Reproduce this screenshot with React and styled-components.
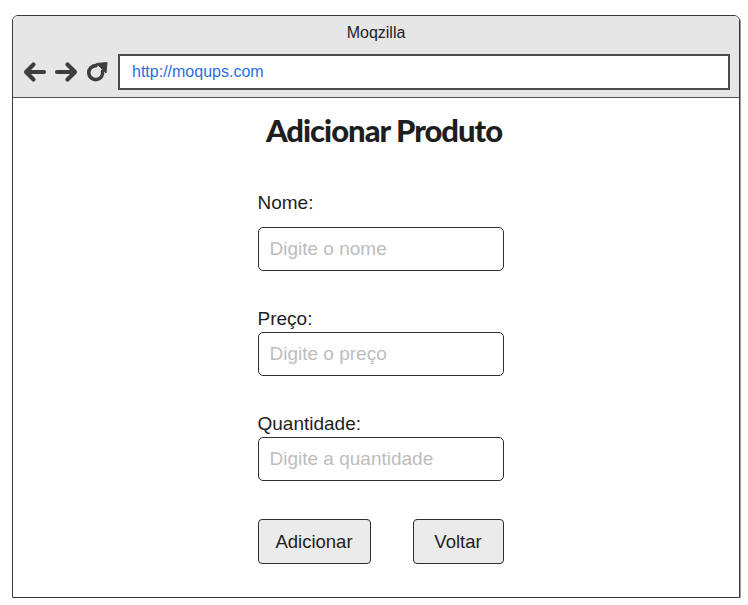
import React from 'react';
import styled, { createGlobalStyle } from 'styled-components';

const GlobalStyle = createGlobalStyle`
  body {
    margin: 0;
    background: #fff;
    font-family: 'Liberation Sans', Arial, sans-serif;
  }
`;

const Window = styled.div`
  box-sizing: border-box;
  width: 728px;
  height: 583px;
  margin: 15px 0 0 12px;
  border: 1px solid #3a3a3a;
  border-radius: 6px 6px 0 0;
  box-shadow: 1px 1px 0 #999;
  display: flex;
  flex-direction: column;
  overflow: hidden;
`;

const Toolbar = styled.div`
  background: #e6e6e6;
  border-bottom: 1px solid #555;
  padding: 7px 9px 8px 9px;
  display: flex;
  flex-direction: column;
  gap: 11px;
`;

const WindowTitle = styled.div`
  text-align: center;
  font-size: 16px;
  line-height: 20px;
  color: #222;
`;

const NavRow = styled.div`
  display: flex;
  align-items: center;
  height: 35px;
`;

const NavIcons = styled.div`
  display: flex;
  align-items: center;
  gap: 5px;
  width: 96px;
`;

const UrlBox = styled.div`
  flex: 1;
  box-sizing: border-box;
  height: 36px;
  border: 2px solid #4a4a4a;
  background: #fff;
  display: flex;
  align-items: center;
  padding-left: 12px;
  color: #2a6ee0;
  font-size: 16px;
`;

const Content = styled.div`
  flex: 1;
  display: flex;
  flex-direction: column;
  align-items: center;
  padding: 12px 0 0 16px;
`;

const Heading = styled.h1`
  margin: 0 0 42px 0;
  font-family: Lato, sans-serif;
  font-weight: 900;
  font-size: 31px;
  letter-spacing: -1px;
  line-height: 40px;
  color: #1e1e1e;
`;

const Form = styled.div`
  width: 246px;
  margin-right: 7px;
  display: flex;
  flex-direction: column;
`;

const Field = styled.div`
  display: flex;
  flex-direction: column;
  gap: ${(p) => p.gap}px;
  margin-bottom: ${(p) => p.after}px;
`;

const Label = styled.label`
  font-size: 19px;
  line-height: 21px;
  color: #1e1e1e;
`;

const Input = styled.input`
  box-sizing: border-box;
  width: 246px;
  height: 44px;
  border: 1px solid #2e2e2e;
  border-radius: 5px;
  padding: 0 11px;
  font-family: 'Liberation Sans', Arial, sans-serif;
  font-size: 19px;
  color: #222;
  outline: none;
  &::placeholder {
    color: #bdbdbd;
  }
`;

const ButtonRow = styled.div`
  display: flex;
  justify-content: space-between;
  margin-top: 1px;
`;

const Button = styled.button`
  box-sizing: border-box;
  width: ${(p) => p.w}px;
  height: 45px;
  background: #ebebeb;
  border: 1px solid #2e2e2e;
  border-radius: 4px;
  font-family: 'Liberation Sans', Arial, sans-serif;
  font-size: 18.5px;
  color: #1e1e1e;
  padding: 0;
`;

const ArrowIcon = ({ flip }) => (
  <svg width="26" height="22" viewBox="0 0 26 22" style={flip ? { transform: 'scaleX(-1)' } : undefined}>
    <path d="M22 11H5M11.5 3.5L4 11l7.5 7.5" fill="none" stroke="#3d3d3d" strokeWidth="4.2" strokeLinecap="round" strokeLinejoin="round" />
  </svg>
);

const ReloadIcon = () => (
  <svg width="24" height="22" viewBox="0 0 24 22">
    <path d="M12 4.6A7 7 0 1 0 18.6 10.2" fill="none" stroke="#3d3d3d" strokeWidth="3.6" strokeLinecap="round" />
    <path d="M12.5 2.5L23 1.5 22 12z" fill="#3d3d3d" stroke="#3d3d3d" strokeWidth="1" strokeLinejoin="round" />
  </svg>
);

const App = () => {
  return (
    <>
      <GlobalStyle />
      <Window>
        <Toolbar>
          <WindowTitle>Moqzilla</WindowTitle>
          <NavRow>
            <NavIcons>
              <ArrowIcon />
              <ArrowIcon flip />
              <ReloadIcon />
            </NavIcons>
            <UrlBox>http://moqups.com</UrlBox>
          </NavRow>
        </Toolbar>
        <Content>
          <Heading>Adicionar Produto</Heading>
          <Form>
            <Field gap={14} after={37}>
              <Label>Nome:</Label>
              <Input placeholder="Digite o nome" />
            </Field>
            <Field gap={3} after={37}>
              <Label>Preço:</Label>
              <Input placeholder="Digite o preço" />
            </Field>
            <Field gap={3} after={37}>
              <Label>Quantidade:</Label>
              <Input placeholder="Digite a quantidade" />
            </Field>
            <ButtonRow>
              <Button w={113}>Adicionar</Button>
              <Button w={91}>Voltar</Button>
            </ButtonRow>
          </Form>
        </Content>
      </Window>
    </>
  );
};

export default App;
